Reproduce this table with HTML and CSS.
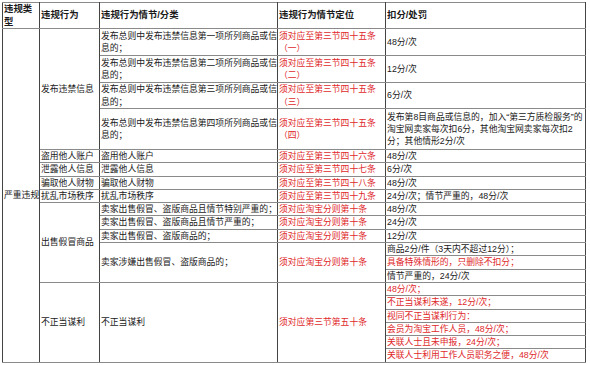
FILE: index.html
```html
<!DOCTYPE html>
<html lang="zh-CN">
<head>
  <meta charset="UTF-8" />
  <title>违规扣分表</title>
  <link rel="stylesheet" href="styles.css">
</head>
<body>
  <table class="rules">
    <colgroup>
      <col class="c-type" />
      <col class="c-act" />
      <col class="c-detail" />
      <col class="c-ref" />
      <col class="c-score" />
    </colgroup>
    <tr class="head">
      <th>违规类<br>型</th>
      <th>违规行为</th>
      <th>违规行为情节/分类</th>
      <th>违规行为情节定位</th>
      <th>扣分/处罚</th>
    </tr>
    <tr class="two">
      <td rowspan="20">严重违规</td>
      <td rowspan="4">发布违禁信息</td>
      <td>发布总则中发布违禁信息第一项所列商品或信<br>息的；</td>
      <td class="red">须对应至第三节四十五条<br>（一）</td>
      <td>48分/次</td>
    </tr>
    <tr class="two">
      <td>发布总则中发布违禁信息第二项所列商品或信<br>息的；</td>
      <td class="red">须对应至第三节四十五条<br>（二）</td>
      <td>12分/次</td>
    </tr>
    <tr class="two b">
      <td>发布总则中发布违禁信息第三项所列商品或信<br>息的；</td>
      <td class="red">须对应至第三节四十五条<br>（三）</td>
      <td>6分/次</td>
    </tr>
    <tr class="three">
      <td>发布总则中发布违禁信息第四项所列商品或信<br>息的；</td>
      <td class="red">须对应至第三节四十五条<br>（四）</td>
      <td>发布第8目商品或信息的，加入“第三方质检服务”的<br>淘宝网卖家每次扣6分，其他淘宝网卖家每次扣2<br>分；其他情形2分/次</td>
    </tr>
    <tr>
      <td>盗用他人账户</td>
      <td>盗用他人账户</td>
      <td class="red">须对应至第三节四十六条</td>
      <td>48分/次</td>
    </tr>
    <tr>
      <td>泄露他人信息</td>
      <td>泄露他人信息</td>
      <td class="red">须对应至第三节四十七条</td>
      <td>6分/次</td>
    </tr>
    <tr>
      <td>骗取他人财物</td>
      <td>骗取他人财物</td>
      <td class="red">须对应至第三节四十八条</td>
      <td>48分/次</td>
    </tr>
    <tr>
      <td>扰乱市场秩序</td>
      <td>扰乱市场秩序</td>
      <td class="red">须对应至第三节四十九条</td>
      <td>24分/次；情节严重的，48分/次</td>
    </tr>
    <tr>
      <td rowspan="6">出售假冒商品</td>
      <td>卖家出售假冒、盗版商品且情节特别严重的；</td>
      <td class="red">须对应淘宝分则第十条</td>
      <td>48分/次</td>
    </tr>
    <tr>
      <td>卖家出售假冒、盗版商品且情节严重的；</td>
      <td class="red">须对应淘宝分则第十条</td>
      <td>24分/次</td>
    </tr>
    <tr>
      <td>卖家出售假冒、盗版商品的；</td>
      <td class="red">须对应淘宝分则第十条</td>
      <td>12分/次</td>
    </tr>
    <tr>
      <td rowspan="3">卖家涉嫌出售假冒、盗版商品的；</td>
      <td rowspan="3" class="red">须对应淘宝分则第十条</td>
      <td>商品2分/件（3天内不超过12分）；</td>
    </tr>
    <tr>
      <td class="red">具备特殊情形的，只删除不扣分；</td>
    </tr>
    <tr>
      <td>情节严重的，24分/次</td>
    </tr>
    <tr>
      <td rowspan="6">不正当谋利</td>
      <td rowspan="6">不正当谋利</td>
      <td rowspan="6" class="red">须对应第三节第五十条</td>
      <td class="red">48分/次；</td>
    </tr>
    <tr><td class="red">不正当谋利未遂，12分/次；</td></tr>
    <tr><td class="red">视同不正当谋利行为：</td></tr>
    <tr><td class="red">会员为淘宝工作人员，48分/次；</td></tr>
    <tr><td class="red">关联人士且未申报，24分/次；</td></tr>
    <tr><td class="red">关联人士利用工作人员职务之便，48分/次</td></tr>
  </table>
</body>
</html>
```

FILE: styles.css
```css
body {
  margin: 2px 0 0 2px;
  background-color: #fff;
  font-family: "Liberation Sans", "Noto Sans CJK SC", sans-serif;
  color: #1a1a1a;
}
.rules {
  border-collapse: collapse;
  table-layout: fixed;
  width: 583px;
  font-size: 8.8px;
  line-height: 12.3px;
}
.c-type { width: 37px; }
.c-act { width: 60px; }
.c-detail { width: 178px; }
.c-ref { width: 108px; }
.c-score { width: 200px; }
.rules th,
.rules td {
  border-top: 1px solid #8a8a8a;
  border-bottom: 1px solid #8a8a8a;
  border-left: 1px solid #444;
  border-right: 1px solid #444;
  padding: 0 0 0 1px;
  vertical-align: middle;
  text-align: left;
  white-space: nowrap;
  overflow: hidden;
}
.rules th {
  font-weight: bold;
  font-size: 9.4px;
}
.head th {
  height: 25px;
}
.two td {
  height: 26px;
}
.two.b td {
  height: 25px;
}
.three td {
  height: 40px;
}
.red {
  color: #e0292b;
}
```
